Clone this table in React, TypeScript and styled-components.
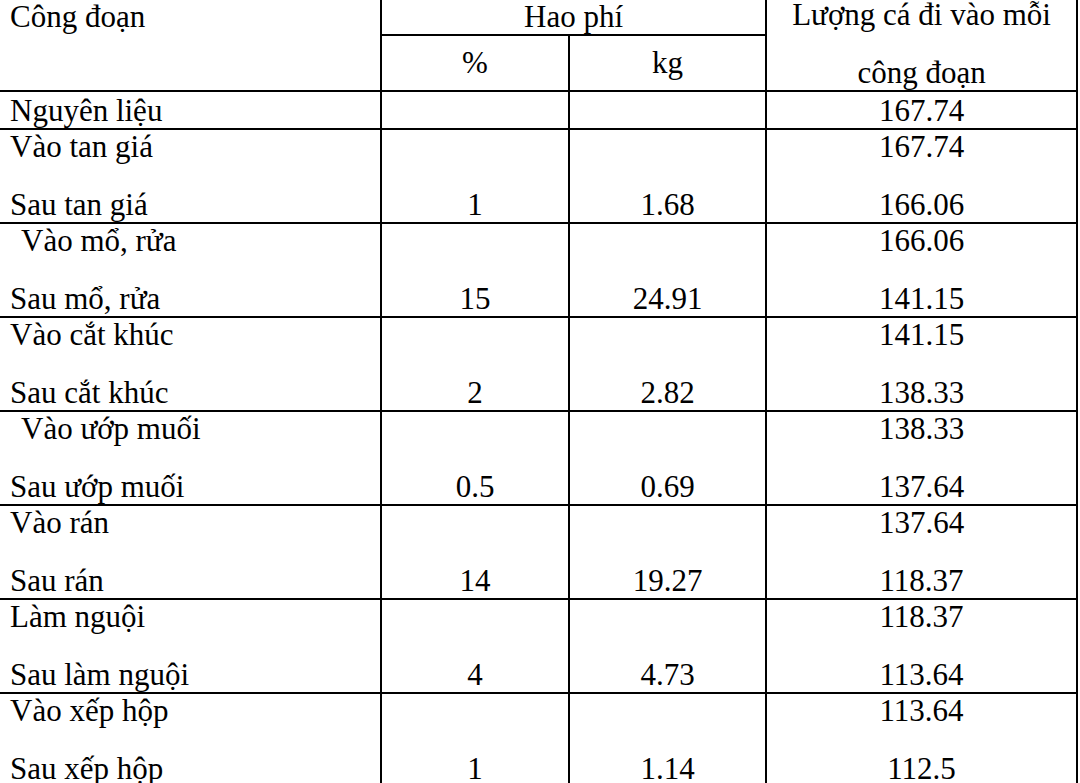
import React from 'react';
import styled, { createGlobalStyle } from 'styled-components';

const GlobalStyle = createGlobalStyle`
  body {
    margin: 0;
    background: #fff;
    overflow: hidden;
    font-family: "Liberation Serif", "Times New Roman", serif;
  }
`;

type Stage = {
  start: string;
  end: string;
  percent: string;
  kg: string;
  before: string;
  after: string;
  indent?: boolean;
};

const stages: Stage[] = [
  { start: 'Vào tan giá', end: 'Sau tan giá', percent: '1', kg: '1.68', before: '167.74', after: '166.06' },
  { start: 'Vào mổ, rửa', end: 'Sau mổ, rửa', percent: '15', kg: '24.91', before: '166.06', after: '141.15', indent: true },
  { start: 'Vào cắt khúc', end: 'Sau cắt khúc', percent: '2', kg: '2.82', before: '141.15', after: '138.33' },
  { start: 'Vào ướp muối', end: 'Sau ướp muối', percent: '0.5', kg: '0.69', before: '138.33', after: '137.64', indent: true },
  { start: 'Vào rán', end: 'Sau rán', percent: '14', kg: '19.27', before: '137.64', after: '118.37' },
  { start: 'Làm nguội', end: 'Sau làm nguội', percent: '4', kg: '4.73', before: '118.37', after: '113.64' },
  { start: 'Vào xếp hộp', end: 'Sau xếp hộp', percent: '1', kg: '1.14', before: '113.64', after: '112.5' },
];

const Sheet = styled.table`
  border-collapse: collapse;
  table-layout: fixed;
  width: 1080px;
  margin: -2px 0 0 -2px;
  color: #000;
`;

const Col = styled.col<{ $w: number }>`
  width: ${p => p.$w}px;
`;

type Part = 'upper' | 'lower' | 'whole';

const Cell = styled.td<{
  $center?: boolean;
  $valign?: 'top' | 'middle' | 'bottom';
  $indent?: boolean;
  $part?: Part;
  $h?: number;
}>`
  font-family: "Liberation Serif", "Times New Roman", serif;
  font-size: 31px;
  line-height: 34px;
  border: 2px solid #000;
  ${p => (p.$part === 'upper' ? 'border-bottom: none;' : '')}
  ${p => (p.$part === 'lower' ? 'border-top: none;' : '')}
  padding: 0 0 0 ${p => (p.$center ? 0 : p.$indent ? 21 : 10)}px;
  text-align: ${p => (p.$center ? 'center' : 'left')};
  vertical-align: ${p => p.$valign ?? 'bottom'};
  white-space: nowrap;
  height: ${p => (p.$h ? `${p.$h}px` : 'auto')};
`;

const HeaderLines = styled.div`
  display: flex;
  flex-direction: column;
  align-items: center;
  gap: 28px;
  line-height: 30px;
`;

const StageRows = ({ stage }: { stage: Stage }) => (
  <>
    <tr>
      <Cell $part="upper" $valign="top" $indent={stage.indent} $h={46}>{stage.start}</Cell>
      <Cell $part="upper" $center />
      <Cell $part="upper" $center />
      <Cell $part="upper" $valign="top" $center>{stage.before}</Cell>
    </tr>
    <tr>
      <Cell $part="lower" $h={46}>{stage.end}</Cell>
      <Cell $part="lower" $center>{stage.percent}</Cell>
      <Cell $part="lower" $center>{stage.kg}</Cell>
      <Cell $part="lower" $center>{stage.after}</Cell>
    </tr>
  </>
);

export default function App() {
  return (
    <>
      <GlobalStyle />
      <Sheet>
        <colgroup>
          <Col $w={382} />
          <Col $w={188} />
          <Col $w={197} />
          <Col $w={311} />
        </colgroup>
        <thead>
          <tr>
            <Cell rowSpan={2} $valign="top">Công đoạn</Cell>
            <Cell colSpan={2} $center $valign="middle" $h={33}>Hao phí</Cell>
            <Cell rowSpan={2} $center $valign="top">
              <HeaderLines>
                <span>Lượng cá đi vào mỗi</span>
                <span>công đoạn</span>
              </HeaderLines>
            </Cell>
          </tr>
          <tr>
            <Cell $center $valign="middle" $h={54}>%</Cell>
            <Cell $center $valign="middle">kg</Cell>
          </tr>
        </thead>
        <tbody>
          <tr>
            <Cell $h={36}>Nguyên liệu</Cell>
            <Cell $center />
            <Cell $center />
            <Cell $center>167.74</Cell>
          </tr>
          {stages.map(stage => (
            <StageRows key={stage.end} stage={stage} />
          ))}
        </tbody>
      </Sheet>
    </>
  );
}
